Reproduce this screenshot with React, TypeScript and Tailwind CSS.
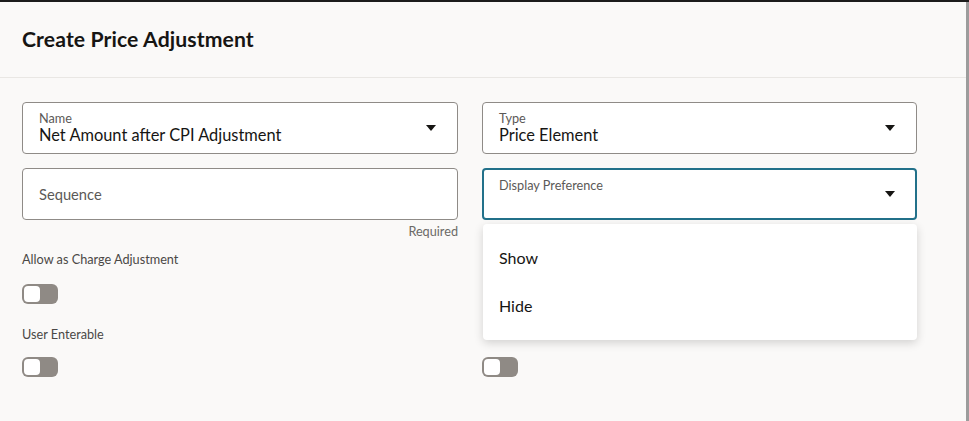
import React from "react";

const Caret = () => (
  <svg width="10" height="6" viewBox="0 0 10 6" className="shrink-0">
    <path d="M0 0 L10 0 L5 6 Z" fill="#161513" />
  </svg>
);

const Toggle = () => (
  <div className="w-[36px] h-[20px] rounded-[6px] bg-[#8f8a85] p-[2px] flex items-center">
    <div className="w-[16px] h-[16px] rounded-[4px] bg-white" />
  </div>
);

const SelectField = ({ label, value }: { label: string; value: string }) => (
  <div className="h-[52px] rounded-[4px] border border-[#8f8b87] bg-white pl-4 pr-[21px] flex items-center justify-between">
    <div className="flex flex-col">
      <span className="text-[12.7px] leading-[14px] text-[#5b5957]">{label}</span>
      <span className="text-[16.4px] leading-[20px] text-[#161513]">{value}</span>
    </div>
    <Caret />
  </div>
);

export default function App() {
  return (
    <div
      className="w-[969px] h-[421px] border-t-2 border-[#1c1c1c] bg-[#faf9f8] overflow-hidden"
      style={{ fontFamily: "Lato, 'Noto Sans', sans-serif" }}
    >
      <div className="h-full border-r-[3px] border-[#9c9c9c] flex flex-col">
        <div className="h-[76px] border-b border-[#e9e7e4] pl-[22px] flex items-center">
          <h1 className="text-[21.2px] font-bold text-[#161513] tracking-[0.1px]">Create Price Adjustment</h1>
        </div>
        <div className="pl-[22px] pt-[24px] grid grid-cols-[436px_435px] gap-x-6">
          {/* Row 1 */}
          <SelectField label="Name" value="Net Amount after CPI Adjustment" />
          <SelectField label="Type" value="Price Element" />

          {/* Row 2 */}
          <div className="mt-[14px] flex flex-col">
            <div className="h-[52px] rounded-[4px] border border-[#8f8b87] bg-white pl-4 flex items-center">
              <span className="text-[14.7px] text-[#5b5957]">Sequence</span>
            </div>
            <div className="text-right text-[12.7px] leading-[16px] mt-[3px] text-[#6b6966]">Required</div>
          </div>
          <div className="mt-[14px] relative">
            <div className="h-[52px] rounded-[4px] border-2 border-[#22718a] bg-white pl-[15px] pr-[20px] flex items-center justify-between">
              <div className="flex flex-col self-start pt-[8px]">
                <span className="text-[12.7px] leading-[14px] text-[#5b5957]">Display Preference</span>
              </div>
              <Caret />
            </div>
            <div className="absolute left-[1px] right-0 top-[56px] z-10 bg-white rounded-[4px] shadow-[0_3px_10px_rgba(0,0,0,0.16)] py-[10px]">
              <div className="h-[48px] px-4 flex items-center text-[16px] text-[#161513]">Show</div>
              <div className="h-[48px] px-4 flex items-center text-[16px] text-[#161513]">Hide</div>
            </div>
          </div>

          {/* Row 3 */}
          <div className="mt-[12px] flex flex-col">
            <span className="text-[12.7px] leading-[16px] text-[#4a4846]">Allow as Charge Adjustment</span>
            <div className="mt-[17px]"><Toggle /></div>
          </div>
          <div className="mt-[12px] flex flex-col">
            <span className="text-[12.7px] leading-[16px] text-[#4a4846]">&nbsp;</span>
            <div className="mt-[17px] h-[20px]" />
          </div>

          {/* Row 4 */}
          <div className="mt-[22px] flex flex-col">
            <span className="text-[12.7px] leading-[16px] text-[#4a4846]">User Enterable</span>
            <div className="mt-[15px]"><Toggle /></div>
          </div>
          <div className="mt-[22px] flex flex-col">
            <span className="text-[12.7px] leading-[16px] text-[#4a4846]">&nbsp;</span>
            <div className="mt-[15px]"><Toggle /></div>
          </div>
        </div>
      </div>
    </div>
  );
}
